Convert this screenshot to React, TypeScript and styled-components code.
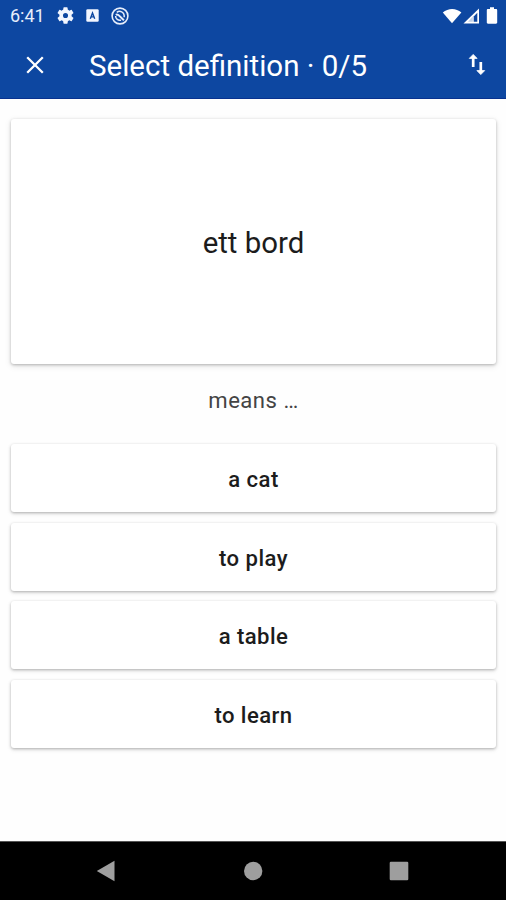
import React from 'react';
import styled, { createGlobalStyle } from 'styled-components';

const GlobalStyle = createGlobalStyle`
  * { box-sizing: border-box; }
  body { margin: 0; background: #fefefe; }
  button { border: 0; padding: 0; background: none; color: inherit; font: inherit; }
  svg { display: block; flex: none; }
`;

const Screen = styled.div`
  width: 506px;
  height: 900px;
  display: flex;
  flex-direction: column;
  overflow: hidden;
  background: #fefefe;
  color: #1c1c1c;
  font-family: Roboto, 'Liberation Sans', sans-serif;
`;

const Header = styled.header`
  flex: none;
  height: 99px;
  background: #0d47a1;
  color: #fff;
  border-bottom: 1px solid #08328f;
`;

const StatusBar = styled.div`
  height: 31px;
  display: flex;
  align-items: center;
  justify-content: space-between;
  padding: 0 8px 0 10px;
`;

const StatusGroup = styled.div<{ $gap: number }>`
  display: flex;
  align-items: center;
  gap: ${(p) => p.$gap}px;
`;

const BatterySlot = styled.span`
  margin-left: 5px;
`;

const Clock = styled.span`
  width: 35px;
  padding-top: 1px;
  font-size: 18px;
  line-height: 30px;
  color: #e7eefb;
  white-space: nowrap;
`;

const AppBar = styled.div`
  height: 68px;
  display: flex;
  align-items: center;
  padding: 0 14px 0 20px;
`;

const Title = styled.h1`
  flex: 1;
  margin: 0 0 0 39px;
  font-size: 29.5px;
  font-weight: 400;
  line-height: 40px;
  padding-top: 2px;
  white-space: nowrap;
`;

const IconButton = styled.button`
  width: 30px;
  height: 30px;
  display: flex;
  align-items: center;
  justify-content: center;
`;

const Content = styled.main`
  flex: 1;
  display: flex;
  flex-direction: column;
  padding: 20px 10px 0 11px;
`;

const WordCard = styled.section`
  height: 245px;
  display: flex;
  align-items: center;
  justify-content: center;
  border-radius: 3px;
  background: #fff;
  box-shadow: 0 1px 3px rgba(0, 0, 0, 0.25), 0 2px 7px rgba(0, 0, 0, 0.1);
  font-size: 29.4px;
  padding-top: 3px;
`;

const Prompt = styled.p`
  height: 80px;
  margin: 0;
  padding-top: 22px;
  text-align: center;
  font-size: 22.1px;
  line-height: 28px;
  letter-spacing: 0.5px;
  color: #444;
`;

const Answers = styled.div`
  display: flex;
  flex-direction: column;
  gap: 10.7px;
`;

const Answer = styled.button`
  height: 68px;
  border-radius: 3px;
  background: #fff;
  box-shadow: 0 1px 3px rgba(0, 0, 0, 0.27), 0 2px 5px rgba(0, 0, 0, 0.08);
  font-size: 22.1px;
  font-weight: 500;
  letter-spacing: 0.45px;
  padding-top: 2px;
`;

const NavBar = styled.nav`
  flex: none;
  height: 59px;
  display: flex;
  align-items: center;
  justify-content: space-between;
  padding: 0 97px 1px 96px;
  border-top: 1px solid #555;
  background: #000;
`;

const GearIcon = () => (
  <svg width="17" height="17" viewBox="2 2 20 20" fill="#f2f6ff">
    <path d="M19.14 12.94c.04-.3.06-.61.06-.94s-.02-.64-.07-.94l2.03-1.58a.49.49 0 0 0 .12-.61l-1.92-3.32a.49.49 0 0 0-.59-.22l-2.39.96a7 7 0 0 0-1.62-.94l-.36-2.54a.48.48 0 0 0-.48-.41h-3.84a.48.48 0 0 0-.47.41l-.36 2.54c-.59.24-1.13.57-1.62.94l-2.39-.96a.48.48 0 0 0-.59.22L2.74 8.87a.48.48 0 0 0 .12.61l2.03 1.58a6 6 0 0 0 0 1.88l-2.03 1.58a.49.49 0 0 0-.12.61l1.92 3.32c.12.22.37.29.59.22l2.39-.96c.5.38 1.03.7 1.62.94l.36 2.54c.05.24.24.41.48.41h3.84c.24 0 .44-.17.47-.41l.36-2.54a7 7 0 0 0 1.62-.94l2.39.96c.22.08.47 0 .59-.22l1.92-3.32a.48.48 0 0 0-.12-.61zM12 15a3 3 0 1 1 0-6 3 3 0 0 1 0 6z" />
  </svg>
);

const KeyboardIcon = () => (
  <svg width="13" height="13" viewBox="0 0 13 13">
    <rect x=".3" y=".3" width="12.4" height="12.4" rx="1.2" fill="#f2f6ff" />
    <path d="M4.3 9.8 6.5 4 8.700 9.800M5 7.900h3" fill="none" stroke="#0d47a1" strokeWidth="1.4" />
  </svg>
);

const BlockedCircleIcon = () => (
  <svg width="18" height="18" viewBox="0 0 18 18" fill="none" stroke="#e7eefb">
    <circle cx="9" cy="9" r="7.9" strokeWidth="1.6" />
    <path d="M5.800 5.400C8.500 3.200 13.600 4.500 13.200 10.200M4.600 9c0 3 2.600 4.800 5.400 4.200" strokeWidth="1.5" />
    <path d="M4.800 7.900C7.500 6.200 8.500 9.600 12.900 13.200" strokeWidth="2" />
  </svg>
);

const WifiIcon = () => (
  <svg width="20" height="16" viewBox="0 0 20 16" fill="#fff">
    <path d="M.8 4.400C6-.3 14.200-.3 19.400 4.400L10 15.300z" />
  </svg>
);

const SignalIcon = () => (
  <svg width="17" height="16" viewBox="0 0 17 16">
    <path d="M16 .4v15.100H.5z" fill="#fff" />
    <path d="M9.800 8.400v5.300H5z" fill="#0d47a1" opacity=".25" />
    <path d="M14.300 4.700v9H10.700V8.400z" fill="#0d47a1" />
  </svg>
);

const BatteryIcon = () => (
  <svg width="12" height="17" viewBox="0 0 12 17" fill="#fff">
    <path d="M4 .3h4v1.700h2c.7 0 1.200.5 1.200 1.200v12.300c0 .7-.5 1.200-1.200 1.200H2c-.7 0-1.200-.5-1.200-1.200V3.200C.8 2.500 1.300 2 2 2h2z" />
  </svg>
);

const CloseIcon = () => (
  <svg width="18" height="18" viewBox="0 0 18 18" fill="none" stroke="#fff" strokeWidth="2.3">
    <path d="M1.200 1.200 16.800 16.800M16.800 1.200 1.200 16.800" />
  </svg>
);

const SwapIcon = () => (
  <svg width="18" height="24" viewBox="0 0 18 24" fill="none" stroke="#fff" strokeWidth="2.7">
    <path d="M5.200 14V4M12.800 9v10" />
    <path d="M1.300 5.400 5.200 1.400 9.100 5.400zM8.900 17.600 12.800 21.600 16.700 17.600z" fill="#fff" strokeWidth=".8" strokeLinejoin="round" />
  </svg>
);

const BackIcon = () => (
  <svg width="19" height="22" viewBox="0 0 19 22">
    <path d="M.8 11 18.500.7v20.600z" fill="#9e9e9e" />
  </svg>
);

const HomeIcon = () => (
  <svg width="22" height="20" viewBox="0 0 22 20">
    <circle cx="12.2" cy="10" r="9.2" fill="#9e9e9e" />
  </svg>
);

const RecentsIcon = () => (
  <svg width="20" height="20" viewBox="0 0 20 20">
    <rect x=".7" y=".7" width="18.6" height="18.6" rx="1.2" fill="#9e9e9e" />
  </svg>
);

const options = ['a cat', 'to play', 'a table', 'to learn'];

export default function App() {
  return (
    <>
      <GlobalStyle />
      <Screen>
        <Header>
          <StatusBar>
            <StatusGroup $gap={12}>
              <Clock>6:41</Clock>
              <GearIcon />
              <KeyboardIcon />
              <BlockedCircleIcon />
            </StatusGroup>
            <StatusGroup $gap={1}>
              <WifiIcon />
              <SignalIcon />
              <BatterySlot>
                <BatteryIcon />
              </BatterySlot>
            </StatusGroup>
          </StatusBar>
          <AppBar>
            <IconButton aria-label="Close"><CloseIcon /></IconButton>
            <Title>Select definition · 0/5</Title>
            <IconButton aria-label="Swap direction"><SwapIcon /></IconButton>
          </AppBar>
        </Header>
        <Content>
          <WordCard>ett bord</WordCard>
          <Prompt>means …</Prompt>
          <Answers>
            {options.map((text) => (
              <Answer key={text}>{text}</Answer>
            ))}
          </Answers>
        </Content>
        <NavBar>
          <BackIcon />
          <HomeIcon />
          <RecentsIcon />
        </NavBar>
      </Screen>
    </>
  );
}
